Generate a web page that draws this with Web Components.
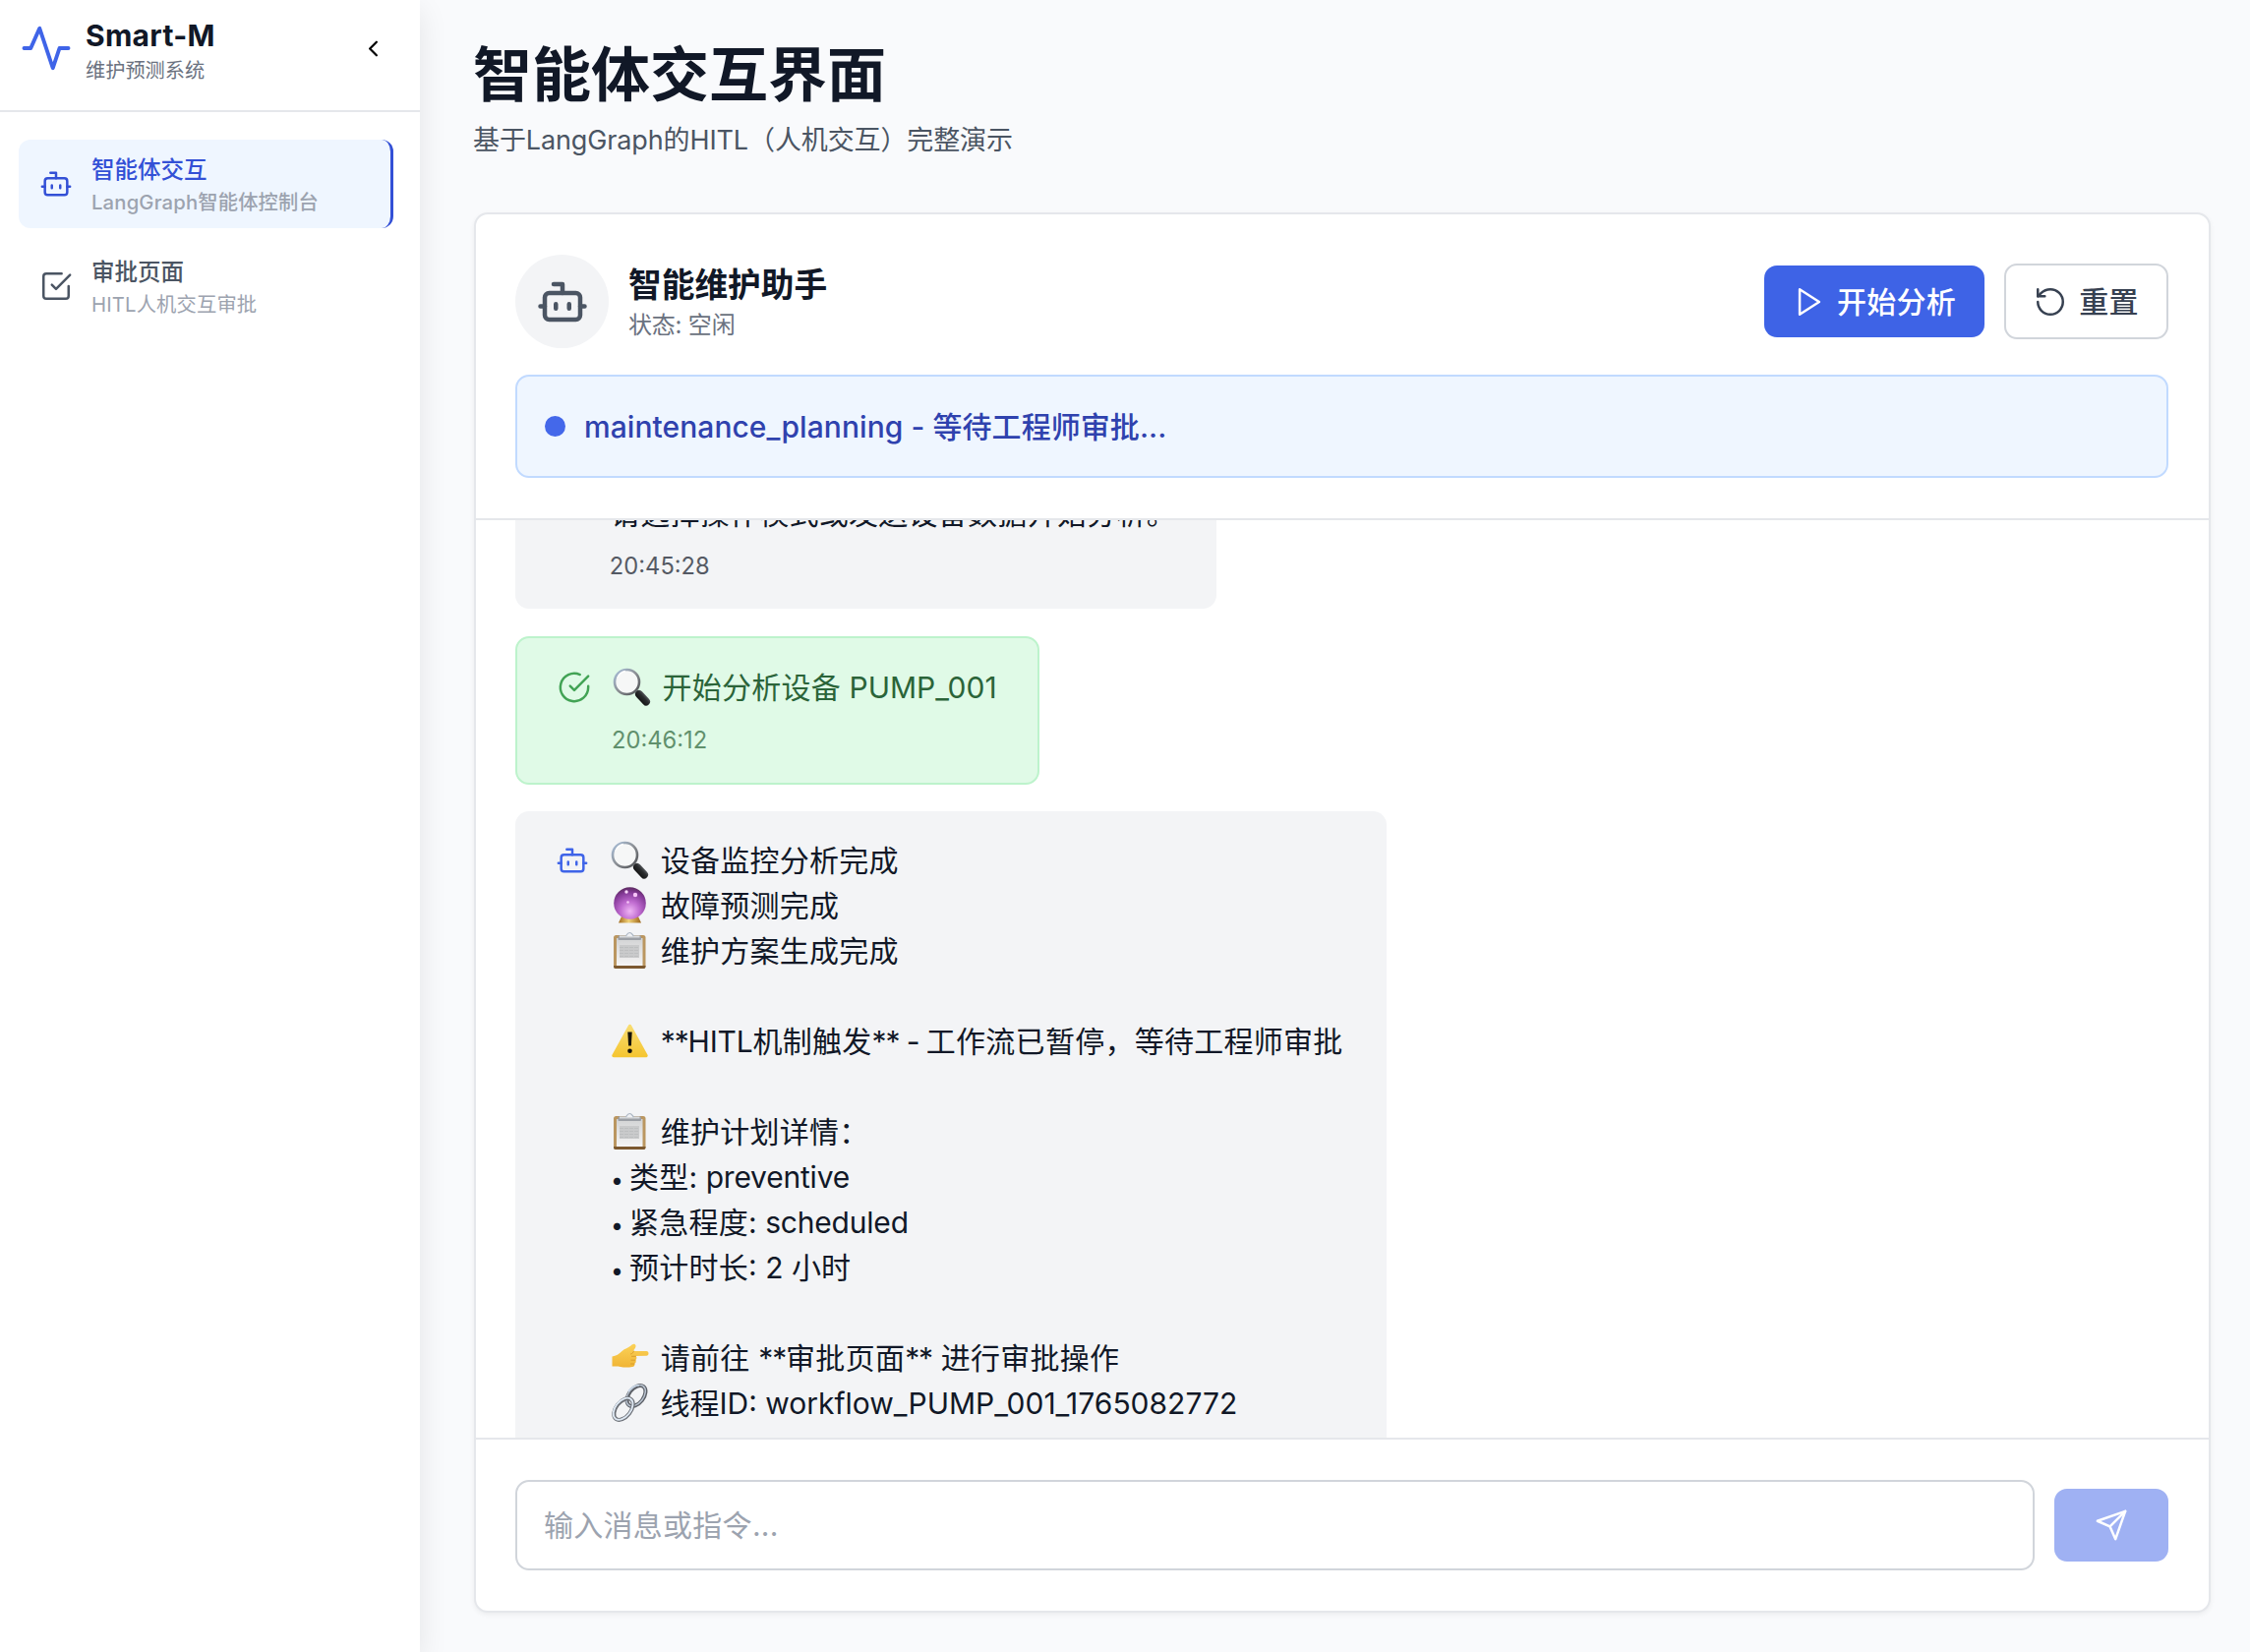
<!DOCTYPE html>
<html lang="zh-CN">
<head>
<meta charset="utf-8">
<title>Smart-M</title>
<style>
html,body{margin:0;height:100%;overflow:hidden}
body{font-family:Inter,"Noto Sans CJK SC",sans-serif;font-size:30px;color:#111827;background:#f9fafc}
.cjk{letter-spacing:.27px}
.st{letter-spacing:-1.1px}
.dot{display:inline-block;width:19px;font-size:23px;line-height:1}
.en{letter-spacing:-.2px}
</style>
</head>
<body>
<app-shell>
  <app-sidebar slot="sidebar">
    <nav-item icon="bot" active><span>智能体交互</span><span slot="sub">LangGraph智能体控制台</span></nav-item>
    <nav-item icon="checksquare"><span>审批页面</span><span slot="sub">HITL人机交互审批</span></nav-item>
  </app-sidebar>
  <page-heading><span>智能体交互界面</span><span slot="sub">基于LangGraph的HITL（人机交互）完整演示</span></page-heading>
  <chat-card>
    <agent-header slot="head">
      <span slot="name">智能维护助手</span><span slot="status">状态: 空闲</span>
      <ui-button icon="play">开始分析</ui-button>
      <ui-button icon="reset" outline>重置</ui-button>
    </agent-header>
    <status-banner slot="head">maintenance_planning - 等待工程师审批...</status-banner>
    <chat-message first time="20:45:28"><div class="cjk">请选择操作模式或发送设备数据开始分析。</div></chat-message>
    <chat-message kind="success" icon="checkcircle" time="20:46:12"><div><emoji-icon name="search"></emoji-icon> <span class="cjk">开始分析设备</span> PUMP_001</div></chat-message>
    <chat-message icon="bot">
      <div class="cjk"><emoji-icon name="search"></emoji-icon> 设备监控分析完成</div>
      <div class="cjk"><emoji-icon name="crystal"></emoji-icon> 故障预测完成</div>
      <div class="cjk"><emoji-icon name="clipboard"></emoji-icon> 维护方案生成完成</div>
      <div>&nbsp;</div>
      <div class="cjk"><emoji-icon name="warning"></emoji-icon> <span class="st">**</span><span class="en">HITL</span>机制触发<span class="st">** - </span>工作流已暂停，等待工程师审批</div>
      <div>&nbsp;</div>
      <div class="cjk"><emoji-icon name="clipboard"></emoji-icon> 维护计划详情：</div>
      <div><span class="dot">•</span><span class="cjk">类型</span>: <span class="en">preventive</span></div>
      <div><span class="dot">•</span><span class="cjk">紧急程度</span>: <span class="en">scheduled</span></div>
      <div><span class="dot">•</span><span class="cjk">预计时长</span>: 2 小时</div>
      <div>&nbsp;</div>
      <div class="cjk"><emoji-icon name="point"></emoji-icon> 请前往 <span class="st">**</span>审批页面<span class="st">**</span> 进行审批操作</div>
      <div><emoji-icon name="link"></emoji-icon> 线程ID: workflow_PUMP_001_1765082772</div>
    </chat-message>
    <chat-input slot="foot">输入消息或指令...</chat-input>
  </chat-card>
</app-shell>
<script>
const ICONS = {
  activity:'<path d="M22 12h-4l-3 9L9 3l-4 9H2"/>',
  chevron:'<path d="m15 18-6-6 6-6"/>',
  bot:'<path d="M12 8V4H8"/><rect x="4" y="8" width="16" height="12" rx="2"/><path d="M2 14h2M20 14h2M15 13v2M9 13v2"/>',
  checksquare:'<path d="m9 11 3 3L22 4"/><path d="M21 12v7a2 2 0 0 1-2 2H5a2 2 0 0 1-2-2V5a2 2 0 0 1 2-2h11"/>',
  checkcircle:'<path d="M22 11.08V12a10 10 0 1 1-5.93-9.14"/><path d="m9 11 3 3L22 4"/>',
  play:'<path d="m5 3 14 9-14 9z"/>',
  reset:'<path d="M3 12a9 9 0 1 0 9-9 9.75 9.75 0 0 0-6.74 2.74L3 8"/><path d="M3 3v5h5"/>',
  send:'<path d="m22 2-7 20-4-9-9-4Z"/><path d="M22 2 11 13"/>'
};
const icon = (n, size, w = 1.75) => ICONS[n] ? `<svg class="ic" width="${size}" height="${size}" viewBox="0 0 24 24" fill="none" stroke="currentColor" stroke-width="${w}" stroke-linecap="round" stroke-linejoin="round">${ICONS[n]}</svg>` : '';
const BASE = '*{box-sizing:border-box}.ic{display:block;flex:none}';
const define = (name, render) => customElements.define(name, class extends HTMLElement {
  connectedCallback(){
    if (this.shadowRoot) return;
    const t = document.createElement('template');
    t.innerHTML = render(this);
    const r = this.attachShadow({mode:'open'});
    r.append(t.content.cloneNode(true));
  }
});

define('app-shell', () => `<style>${BASE}
:host{display:flex;height:1680px;width:2288px}
main{flex:1;min-width:0;display:flex;flex-direction:column;padding:40px 40px 40px 55px}
</style><slot name="sidebar"></slot><main><slot></slot></main>`);

define('app-sidebar', () => `<style>${BASE}
:host{display:flex;flex-direction:column;flex:none;width:427px;background:#fff;box-shadow:0 10px 28px rgba(0,0,0,.09)}
header{display:flex;align-items:center;height:114px;border-bottom:2px solid #e5e7eb;padding:0 34px 14px 20px}
.ac{color:#3f64e8}
.t{margin-left:13px;flex:1;display:flex;flex-direction:column;padding-top:8px}
b{font-size:30px;line-height:36px;font-weight:700;letter-spacing:.3px}
small{font-size:20.2px;line-height:34px;color:#6b7280;margin-top:1px}
.ch{color:#000}
nav{display:flex;flex-direction:column;gap:14px;padding:28px 27px 0 19px}
</style><header><span class="ac">${icon('activity',54)}</span><div class="t"><b>Smart-M</b><small>维护预测系统</small></div><span class="ch">${icon('chevron',27,2)}</span></header><nav><slot></slot></nav>`);

define('nav-item', e => `<style>${BASE}
:host{display:flex;align-items:center;height:90px;padding-left:21px;border-radius:12px;color:#4b5563;gap:19px}
:host([active]){background:#eff6ff;color:#3350d6;border-right:3px solid #3350d6}
.x{display:flex;flex-direction:column;padding-top:4px}
.a{font-size:23.5px;line-height:33px;font-weight:500}
.b{font-size:20.3px;line-height:33px;font-weight:400;color:#9ca3af;letter-spacing:.15px}
:host([active]) .b{font-weight:500}
</style>${icon(e.getAttribute('icon'),34)}<div class="x"><div class="a"><slot></slot></div><div class="b"><slot name="sub"></slot></div></div>`);

define('page-heading', () => `<style>${BASE}
:host{display:block;height:176px}
h1{margin:0 0 0 -1px;font-size:60px;line-height:72px;font-weight:700}
p{margin:10px 0 0 -1px;font-size:27px;line-height:42px;color:#4b5563;letter-spacing:-.12px}
</style><h1><slot></slot></h1><p><slot name="sub"></slot></p>`);

define('chat-card', () => `<style>${BASE}
:host{display:flex;flex-direction:column;flex:1;min-height:0;background:#fff;border:2px solid #e5e7eb;border-radius:14px;box-shadow:0 2px 5px rgba(0,0,0,.06)}
.h{padding:41px 41px 41px 40px;height:311px;border-bottom:2px solid #e5e7eb;display:flex;flex-direction:column;gap:27px}
.m{flex:1;min-height:0;overflow:hidden;display:flex;flex-direction:column;align-items:flex-start;padding:0 40px;gap:27.5px}
.f{border-top:2px solid #e5e7eb;padding:41px 41px 41px 40px}
</style><div class="h"><slot name="head"></slot></div><div class="m"><slot></slot></div><div class="f"><slot name="foot"></slot></div>`);

define('agent-header', () => `<style>${BASE}
:host{display:flex;align-items:center;height:95px}
.c{width:95px;height:95px;border-radius:50%;background:#f3f4f6;color:#4b5563;display:flex;align-items:center;justify-content:center}
.t{flex:1;margin-left:20px;padding-top:3px}
.n{font-size:33.7px;line-height:44px;font-weight:600}
.s{font-size:24px;line-height:36px;color:#6b7280;letter-spacing:-.2px;margin-top:1px}
.b{display:flex;align-items:center;gap:20px}
</style><div class="c">${icon('bot',54,2)}</div><div class="t"><div class="n"><slot name="name"></slot></div><div class="s"><slot name="status"></slot></div></div><div class="b"><slot></slot></div>`);

define('ui-button', e => `<style>${BASE}
:host{display:flex;align-items:center;justify-content:center;gap:11px;height:73px;width:224px;border-radius:13px;background:#3e63e6;color:#fff;font-size:30px;line-height:44px;font-weight:500}
:host([outline]){height:77px;width:167px;background:#fff;border:2px solid #d1d5db;color:#374151;box-sizing:border-box;gap:12px}
span{letter-spacing:.2px}
</style>${icon(e.getAttribute('icon'),34)}<span><slot></slot></span>`);

define('status-banner', () => `<style>${BASE}
:host{display:flex;align-items:center;box-sizing:border-box;height:105px;border:2px solid #c1daff;border-radius:14px;background:#eff6ff;color:#2f42ae;padding-left:28px;gap:19px;font-weight:500;font-size:30px;line-height:46px;letter-spacing:.06px}
i{width:21px;height:21px;border-radius:50%;background:#4468ea}
</style><i></i><span><slot></slot></span>`);

define('chat-message', e => `<style>${BASE}
:host{display:flex;flex:none;box-sizing:border-box;background:#f3f4f6;border-radius:14px;padding:27px 41px;color:#111827;gap:22px}
:host([first]){margin-top:-57px;width:713px}
:host([kind=success]){background:#e0fae7;border:2px solid #bdf3cc;color:#2b6439}
:host([icon=bot]){width:886px}
.i{width:34px;height:46px;display:flex;align-items:center;color:#3f64e8}
:host([kind=success]) .i{color:#42a355}
.l{line-height:46px;white-space:nowrap}
.l ::slotted(div){height:46px}
.w{font-size:23.7px;line-height:34px;margin:14px 0 -1px -1px;opacity:.7}
</style><div class="i">${icon(e.getAttribute('icon'),34)}</div><div class="l"><slot></slot>${e.hasAttribute('time')?`<div class="w">${e.getAttribute('time')}</div>`:''}</div>`);

define('chat-input', () => `<style>${BASE}
:host{display:flex;align-items:center;gap:20px}
.f{flex:1;height:92px;border:2px solid #d1d5db;border-radius:14px;padding-left:27px;display:flex;align-items:center;color:#9ca3af;line-height:46px;letter-spacing:.27px}
.s{width:116px;height:74px;border-radius:13px;background:#9fb1f3;color:#fff;display:flex;align-items:center;justify-content:center}
</style><div class="f"><span><slot></slot></span></div><div class="s">${icon('send',34)}</div>`);

const EMOJI = {
  search:`<defs><linearGradient id="r" x1="0" y1="0" x2="1" y2="1"><stop offset="0" stop-color="#a9c0dc"/><stop offset=".5" stop-color="#8b8f94"/><stop offset="1" stop-color="#4b4d50"/></linearGradient><linearGradient id="h" x1="0" y1="1" x2="1" y2="0"><stop offset="0" stop-color="#111"/><stop offset=".6" stop-color="#2a2c2e"/><stop offset="1" stop-color="#62666a"/></linearGradient></defs>
  <path d="M24 24l4 4" stroke="#777b80" stroke-width="3"/><path d="M27 27l7 7.500" stroke="url(#h)" stroke-width="8" stroke-linecap="round"/><circle cx="14.5" cy="14.500" r="12.500" fill="#f6f7f7" stroke="url(#r)" stroke-width="2.600"/><path d="M5 10a10.5 10.5 0 0 1 8-6.5" stroke="#fff" stroke-width="1.3" fill="none"/>`,
  crystal:`<defs><radialGradient id="g" cx=".5" cy=".75" r=".75"><stop offset="0" stop-color="#efb5f4"/><stop offset=".4" stop-color="#bf6bd0"/><stop offset=".78" stop-color="#853a98"/><stop offset="1" stop-color="#5c2a60"/></radialGradient><linearGradient id="b"><stop offset="0" stop-color="#a06a1b"/><stop offset=".45" stop-color="#f1d27a"/><stop offset="1" stop-color="#9c6518"/></linearGradient></defs>
  <path d="M11 31h17l3 6.500H8z" fill="url(#b)"/><circle cx="19.500" cy="17.500" r="16.300" fill="url(#g)"/><circle cx="16" cy="6" r="1.700" fill="#fbd9fb"/><circle cx="25" cy="9" r="2.200" fill="#f7c5f8"/><circle cx="17.500" cy="16.500" r="1.300" fill="#f5c5f5"/>`,
  clipboard:`<defs><linearGradient id="p" x1="0" y1="0" x2="0" y2="1"><stop offset="0" stop-color="#d2d3d4"/><stop offset="1" stop-color="#f5f5f5"/></linearGradient></defs>
  <rect x="3" y="4" width="32.500" height="34" rx="2.500" fill="#ba9660"/><path d="M3 35h32.500v1a2 2 0 0 1-2 2h-28.500a2 2 0 0 1-2-2z" fill="#7c5930"/><rect x="6" y="7" width="26.500" height="28" fill="url(#p)"/><path d="M9 14h20v13H9z" fill="#c9cacb"/><path d="M9 16.500h20M9 19.500h20M9 22.500h20M9 25.500h20" stroke="#babcbd" stroke-width=".8" stroke-dasharray="4 1"/><rect x="7.500" y="4.500" width="23.500" height="4.500" rx="1" fill="#9b9fa5"/><path d="M9 5.500h20.500" stroke="#d8dadd" stroke-width="2"/><path d="M15.500 5c1-1.500 1.500-3.500 3.800-3.500S22 3.500 23.500 5" fill="#eef0f3" stroke="#a9b4c1" stroke-width="1.200"/>`,
  warning:`<defs><linearGradient id="y" x1="0" y1="0" x2="0" y2="1"><stop offset="0" stop-color="#f8dc70"/><stop offset="1" stop-color="#f5c633"/></linearGradient></defs>
  <path d="M19.500 4.500 36 34.500H3z" fill="url(#y)" stroke="url(#y)" stroke-width="3.500" stroke-linejoin="round"/><path d="M17.300 10.500h4.400l-.8 14h-2.800z" fill="#16130a"/><circle cx="19.500" cy="29.700" r="2.300" fill="#16130a"/>`,
  link:`<g fill="none"><ellipse cx="26" cy="12.500" rx="7.500" ry="12" transform="rotate(38 26 12.500)" stroke="#5d6168" stroke-width="4"/><ellipse cx="25.600" cy="12.200" rx="7.800" ry="12.200" transform="rotate(38 25.600 12.200)" stroke="#b9c3d0" stroke-width="1.500"/><ellipse cx="13" cy="26" rx="7.500" ry="12.500" transform="rotate(38 13 26)" stroke="#6a6e75" stroke-width="4"/><ellipse cx="12.600" cy="25.700" rx="7.800" ry="12.600" transform="rotate(38 12.600 25.700)" stroke="#dde7f2" stroke-width="1.900"/><path d="M18 8c2.500-3.500 7-6.500 11-6.200" stroke="#cad8e8" stroke-width="1.600"/></g>`,
  point:`<defs><linearGradient id="k" x1="0" y1="0" x2="0" y2="1"><stop offset="0" stop-color="#fbd258"/><stop offset="1" stop-color="#f0b435"/></linearGradient></defs>
  <path d="M1.500 18.500c4-.5 7-2.500 10-5.500 3-2.800 6-3 9-5.500 1.500-1.500 3-2.300 4.300-1.300 1.500 1.200.5 3.500-.8 5-.8 1-1 1.500-.6 1.800h13c2.800 0 2.900 4.600 0 4.700l-11 .3c1.500 1 1.400 3-.1 3.900.9 1.300.4 3.100-1 3.800.6 1.700-.6 3.100-2.300 3.300-4 .8-8.500.8-12 0-3-.7-5.500-.3-8.500-.5z" fill="url(#k)"/><path d="M25.500 18.300h-4M25 22.200h-4M24 26h-3.500M20.500 16c1.700-.5 2.500-1.500 3-3" stroke="#d79a29" stroke-width=".9" fill="none" stroke-linecap="round"/>`
};
define('emoji-icon', e => `<style>:host{display:inline-block;width:42px;height:38px;vertical-align:-7px}svg{display:block;overflow:visible}</style><svg width="39" height="39" viewBox="0 0 39 39" role="img">${EMOJI[e.getAttribute('name')]}</svg>`);
</script>
</body>
</html>
